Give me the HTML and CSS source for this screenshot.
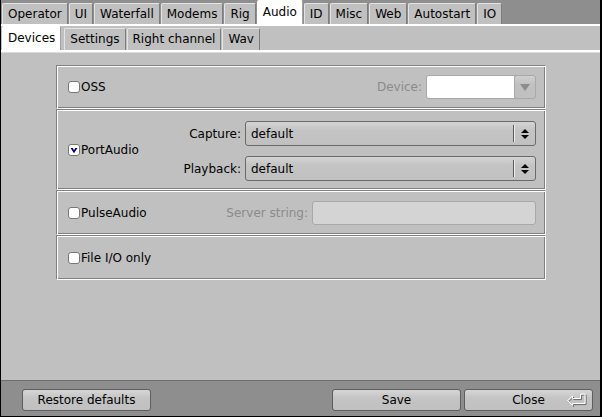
FILE: index.html
```html
<!DOCTYPE html>
<html>
<head>
<meta charset="utf-8">
<link rel="stylesheet" href="styles.css">
</head>
<body>
<div class="window">
  <div class="tabs outer-tabs">
    <div class="tab">Operator</div>
    <div class="tab">UI</div>
    <div class="tab">Waterfall</div>
    <div class="tab">Modems</div>
    <div class="tab">Rig</div>
    <div class="tab active">Audio</div>
    <div class="tab">ID</div>
    <div class="tab">Misc</div>
    <div class="tab">Web</div>
    <div class="tab">Autostart</div>
    <div class="tab">IO</div>
  </div>
  <div class="outer-panel">
    <div class="tabs inner-tabs">
      <div class="tab active">Devices</div>
      <div class="tab">Settings</div>
      <div class="tab">Right channel</div>
      <div class="tab">Wav</div>
    </div>
    <div class="inner-panel">
      <div class="frame frame-oss">
        <label class="checkrow"><span class="check"></span>OSS</label>
        <span class="dim-label push">Device:</span>
        <div class="combo">
          <div class="combo-field"></div>
          <div class="combo-btn"><span class="tri-down"></span></div>
        </div>
      </div>
      <div class="frame frame-port">
        <label class="checkrow"><span class="check checked"><svg width="10" height="10" viewBox="0 0 10 10"><polygon points="1.5,3 3.8,3 5,5.3 6.2,3 8.5,3 5,8.2" fill="#00007a"/></svg></span>PortAudio</label>
        <div class="choice-grid push">
          <span class="field-label">Capture:</span>
          <div class="choice"><span class="choice-text">default</span><span class="choice-arrows"><span class="tri-up"></span><span class="tri-dn"></span></span></div>
          <span class="field-label">Playback:</span>
          <div class="choice"><span class="choice-text">default</span><span class="choice-arrows"><span class="tri-up"></span><span class="tri-dn"></span></span></div>
        </div>
      </div>
      <div class="frame frame-pulse">
        <label class="checkrow"><span class="check"></span>PulseAudio</label>
        <span class="dim-label push">Server string:</span>
        <div class="input-disabled"></div>
      </div>
      <div class="frame frame-file">
        <label class="checkrow"><span class="check"></span>File I/O only</label>
      </div>
    </div>
  </div>
  <div class="bottombar">
    <button class="btn">Restore defaults</button>
    <button class="btn push">Save</button>
    <button class="btn btn-close">Close<svg class="ret-icon" width="21" height="14" viewBox="0 0 21 14"><path d="M2 8 L7 3.5 L7 6 L15 6 L15 1.5 L19.5 1.5 L19.5 11 L7 11 L7 13 Z" fill="none" stroke="#6a6a6a" stroke-width="1" transform="translate(0.6,0.6)"/><path d="M1.5 7.5 L6.5 3 L6.5 5.5 L14.5 5.5 L14.5 1 L19 1 L19 10.5 L6.5 10.5 L6.5 12.5 Z" fill="none" stroke="#ffffff" stroke-width="1"/></svg></button>
  </div>
</div>
</body>
</html>
```
FILE: styles.css
```css
* { box-sizing: border-box; }
html, body { margin: 0; padding: 0; }
body {
  font-family: "DejaVu Sans", "Noto Sans", sans-serif;
  font-size: 12px;
  color: #000;
  background: #8e8e8e;
}
.window {
  width: 602px;
  height: 417px;
  border-style: solid;
  border-color: #000;
  border-width: 0 2px 1px 1px;
  background: #8e8e8e;
  display: flex;
  flex-direction: column;
}
.tabs {
  display: flex;
  align-items: flex-end;
  gap: 1px;
  height: 24px;
  padding-left: 1px;
  flex: none;
}
.tab {
  height: 21px;
  padding: 0 5px 1px;
  background: #c0c0c0;
  border: 1px solid;
  border-color: #e4e4e4 #7c7c7c transparent #e4e4e4;
  border-bottom: none;
  border-radius: 2px 2px 0 0;
  display: flex;
  align-items: center;
  white-space: nowrap;
}
.tab.active {
  height: 24px;
  background: #fff;
  border-color: #fff #a0a0a0 transparent #fff;
  padding-bottom: 2px;
}
.inner-tabs .tab { height: 22px; }
.inner-tabs .tab.active { height: 24px; margin-right: 2px; }
.outer-panel {
  flex: 1;
  background: #c0c0c0;
  border-top: 2px solid #fff;
  display: flex;
  flex-direction: column;
}
.inner-panel {
  flex: 1;
  border-top: 2px solid #fff;
  box-shadow: inset 0 1px 0 #dcdcdc;
  padding: 13px 0 0 55px;
}
.frame {
  width: 490px;
  border: 1px solid;
  border-color: #808080 #fff #fff #808080;
  box-shadow: inset 1px 1px 0 #fff, inset -1px -1px 0 #808080;
  display: flex;
  align-items: center;
  padding: 0 9px 0 11px;
}
.frame-oss { height: 44px; }
.frame-port { height: 81px; }
.frame-pulse { height: 45px; }
.frame-file { height: 45px; }
.push { margin-left: auto; }
.checkrow {
  display: flex;
  align-items: center;
  white-space: nowrap;
}
.check {
  width: 12px;
  height: 12px;
  border: 1px solid #777;
  border-radius: 3px;
  background: #fff;
  margin-right: 1px;
  display: flex;
  align-items: center;
  justify-content: center;
}
.check svg { display: block; }
.dim-label { color: #8b8b8b; margin-right: 4px; }
.combo {
  display: flex;
  height: 24px;
  width: 110px;
  border: 1px solid #a8a8a8;
  border-radius: 3px;
  overflow: hidden;
}
.combo-field { flex: 1; background: #fff; }
.combo-btn {
  width: 22px;
  border: 1px solid #a8a8a8;
  border-radius: 3px;
  margin: -1px -1px -1px 0;
  background: linear-gradient(#d0d0d0, #c0c0c0 40%);
  display: flex;
  align-items: center;
  justify-content: center;
}
.tri-down {
  width: 0; height: 0;
  border-left: 5px solid transparent;
  border-right: 5px solid transparent;
  border-top: 7px solid #8c8c8c;
}
.choice-grid {
  display: grid;
  grid-template-columns: auto 291px;
  column-gap: 4px;
  row-gap: 10px;
  align-items: center;
  margin-top: 3px;
}
.field-label { text-align: right; white-space: nowrap; }
.choice {
  height: 25px;
  border: 1px solid #6a6a6a;
  border-radius: 3px;
  background: linear-gradient(#d4d4d4, #c4c4c4 35%, #c0c0c0);
  display: flex;
  align-items: center;
}
.choice-text { flex: 1; padding-left: 5px; }
.choice-arrows {
  width: 22px;
  height: 17px;
  border-left: 1px solid #5a5a5a;
  box-shadow: inset 1px 0 0 #eee;
  display: flex;
  flex-direction: column;
  align-items: center;
  justify-content: center;
  gap: 2px;
}
.tri-up, .tri-dn {
  width: 0; height: 0;
  border-left: 4px solid transparent;
  border-right: 4px solid transparent;
}
.tri-up { border-bottom: 4px solid #000; }
.tri-dn { border-top: 4px solid #000; }
.input-disabled {
  width: 224px;
  height: 24px;
  background: #d4d4d4;
  border: 1px solid #a8a8a8;
  border-radius: 3px;
}
.bottombar {
  height: 36px;
  flex: none;
  border-top: 1px solid #6c6c6c;
  display: flex;
  align-items: flex-start;
  gap: 3px;
  padding: 8px 7px 0 21px;
}
.btn {
  width: 129px;
  height: 22px;
  font: inherit;
  color: #000;
  border: 1px solid #5e5e5e;
  border-radius: 3px;
  background: linear-gradient(#d6d6d6, #c4c4c4 40%, #c0c0c0);
  padding: 0;
  display: flex;
  align-items: center;
  justify-content: center;
  position: relative;
}
.ret-icon {
  position: absolute;
  right: 5px;
  top: 3px;
}
```
